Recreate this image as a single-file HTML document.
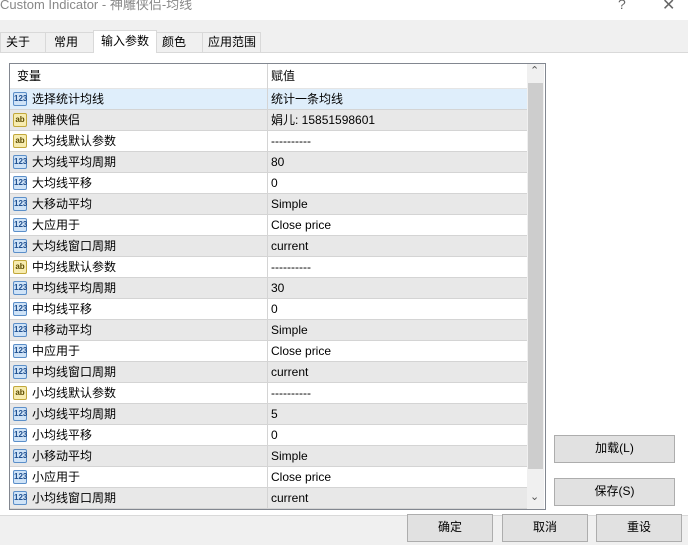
<!DOCTYPE html><html><head><meta charset="utf-8"><style>
*{margin:0;padding:0;box-sizing:border-box}
body{width:688px;height:545px;background:#f0f0f0;font-family:"Liberation Sans","Noto Sans CJK SC",sans-serif;font-size:12px;color:#000;position:relative;overflow:hidden}
.abs{position:absolute}
.tb{left:0;top:0;width:688px;height:20px;background:#fff}
.title{left:0;top:-4px;font-size:13px;color:#888;line-height:18px}
.tab{position:absolute;top:32px;height:20px;border:1px solid #d9d9d9;border-bottom:none;background:#f0f0f0;padding-left:5px;font-size:12px;line-height:19px}
.panel{left:0;top:52px;width:688px;height:464px;background:#fff;border-top:1px solid #d9d9d9;border-bottom:1px solid #d9d9d9}
.list{left:9px;top:63px;width:537px;height:447px;border:1px solid #828790;background:#fff;overflow:hidden}
.row{position:absolute;left:0;width:517px;height:21px;border-bottom:1px solid #d4d4d4;line-height:20px}
.row .n{position:absolute;left:22px;top:0}
.row .v{position:absolute;left:261px;top:0}
.row .d{position:absolute;left:257px;top:0;width:1px;height:21px;background:#d4d4d4}
.ic{position:absolute;left:3px;top:3px;width:14px;height:14px;border-radius:2px;font-size:8px;line-height:12px;text-align:center;font-weight:bold}
.i1{background:#cfe3f7;border:1px solid #5b8fc9;color:#1f4f8f}
.i2{background:#f7ecb0;border:1px solid #c2a83b;color:#5a4a00}
.btn{position:absolute;background:#e1e1e1;border:1px solid #adadad;text-align:center;line-height:25px;font-size:12px}
</style></head><body>
<div class="abs tb"></div>
<div class="abs title">Custom Indicator - 神雕侠侣-均线</div>
<div class="abs" style="left:618px;top:-4px;font-size:14px;color:#666">?</div>
<div class="abs" style="left:662px;top:-5px;font-size:16px;color:#666">✕</div>
<div class="abs panel"></div>
<div class="tab" style="left:0;width:46px">关于</div>
<div class="tab" style="left:45px;width:49px;padding-left:8px">常用</div>
<div class="tab" style="left:93px;width:64px;top:30px;height:23px;background:#fff;border-color:#d9d9d9;padding-left:7px;line-height:21px">输入参数</div>
<div class="tab" style="left:156px;width:47px">颜色</div>
<div class="tab" style="left:202px;width:59px">应用范围</div>
<div class="abs list">
<div class="row" style="top:0;height:25px;border-bottom:1px solid #e5e5e5;line-height:24px"><span class="n" style="left:7px">变量</span><span class="d" style="height:25px"></span><span class="v">赋值</span></div>
<div id="rows"></div>
<div class="abs" style="left:517px;top:0;width:17px;height:445px;background:#f0f0f0"></div>
<div class="abs" style="left:518px;top:19px;width:15px;height:386px;background:#cdcdcd"></div>
<div class="abs" style="left:520px;top:0px;font-size:11px;color:#555">⌃</div>
<div class="abs" style="left:520px;top:426px;font-size:11px;color:#555">⌄</div>
</div>
<script>
var d=[[1,"选择统计均线","统计一条均线"],[2,"神雕侠侣","娟儿: 15851598601"],[2,"大均线默认参数","----------"],[1,"大均线平均周期","80"],[1,"大均线平移","0"],[1,"大移动平均","Simple"],[1,"大应用于","Close price"],[1,"大均线窗口周期","current"],[2,"中均线默认参数","----------"],[1,"中均线平均周期","30"],[1,"中均线平移","0"],[1,"中移动平均","Simple"],[1,"中应用于","Close price"],[1,"中均线窗口周期","current"],[2,"小均线默认参数","----------"],[1,"小均线平均周期","5"],[1,"小均线平移","0"],[1,"小移动平均","Simple"],[1,"小应用于","Close price"],[1,"小均线窗口周期","current"]];
var h="";d.forEach(function(r,i){var bg=i==0?"#dfeefb":(i%2?"#e8e8e8":"#fff");
h+='<div class="row" style="top:'+(25+i*21)+'px;background:'+bg+'"><span class="ic '+(r[0]==1?'i1">123':'i2">ab')+'</span><span class="n">'+r[1]+'</span><span class="d"></span><span class="v">'+r[2]+'</span></div>';});
document.getElementById("rows").innerHTML=h;
</script>
<div class="btn" style="left:554px;top:435px;width:121px;height:28px">加载(L)</div>
<div class="btn" style="left:554px;top:478px;width:121px;height:28px">保存(S)</div>
<div class="btn" style="left:407px;top:514px;width:86px;height:28px">确定</div>
<div class="btn" style="left:502px;top:514px;width:86px;height:28px">取消</div>
<div class="btn" style="left:596px;top:514px;width:86px;height:28px">重设</div>
</body></html>
